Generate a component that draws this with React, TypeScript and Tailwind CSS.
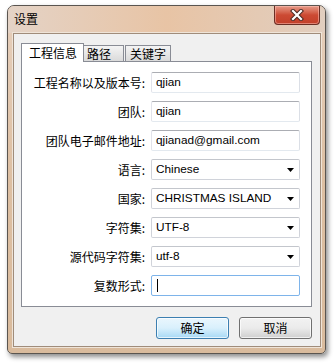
import React from "react";

const cjk = { fontFamily: '"Noto Sans CJK SC", "Noto Sans", sans-serif' };
const latin = { fontFamily: '"Liberation Sans", Arial, sans-serif' };

function Arrow() {
  return (
    <svg width="7" height="4" viewBox="0 0 7 4" className="shrink-0">
      <path d="M0 0 H7 L3.5 4 Z" fill="#000" />
    </svg>
  );
}

function TextBox({ value, focused }: { value?: string; focused?: boolean }) {
  return (
    <div
      className={
        "h-[21px] w-[149px] rounded-[2px] border bg-white flex items-center pl-[4px] text-[11.8px] text-black " +
        (focused
          ? "border-[#7eb4ea]"
          : "border-t-[#abadb3] border-l-[#e2e3ea] border-r-[#dbdfe6] border-b-[#e3e9ef]")
      }
      style={latin}
    >
      {focused ? <span className="ml-px w-px h-[13px] bg-black" /> : value}
    </div>
  );
}

function Combo({ value }: { value: string }) {
  return (
    <div
      className="h-[21px] w-[149px] rounded-[2px] border border-[#d0d3da] border-t-[#c3c6cc] bg-white flex items-center justify-between pl-[4px] pr-[5px] text-[11.8px] text-black"
      style={latin}
    >
      <span>{value}</span>
      <Arrow />
    </div>
  );
}

const rows: { label: string; kind: "text" | "combo" | "focus"; value?: string }[] = [
  { label: "工程名称以及版本号:", kind: "text", value: "qjian" },
  { label: "团队:", kind: "text", value: "qjian" },
  { label: "团队电子邮件地址:", kind: "text", value: "qjianad@gmail.com" },
  { label: "语言:", kind: "combo", value: "Chinese" },
  { label: "国家:", kind: "combo", value: "CHRISTMAS ISLAND" },
  { label: "字符集:", kind: "combo", value: "UTF-8" },
  { label: "源代码字符集:", kind: "combo", value: "utf-8" },
  { label: "复数形式:", kind: "focus" },
];

export default function App() {
  return (
    <div className="w-[336px] h-[364px] bg-white pl-[7px] pt-[5px]">
      <div className="w-[319px] h-[349px] rounded-t-[7px] rounded-b-[5px] border border-[#5a5550] flex flex-col shadow-[2px_3px_5px_rgba(0,0,0,0.45)] bg-gradient-to-b from-[#e6cfbc] via-[#ddbfa2] to-[#d9bb9d]">
        {/* title bar */}
        <div className="h-[27px] flex items-start justify-between rounded-t-[6px] bg-gradient-to-r from-[#e4d3c6] via-[#e8c4a5] to-[#e1cebf]">
          <div className="pl-[6px] pt-[6px] text-[12px] leading-[14px] text-black" style={cjk}>
            设置
          </div>
          <div className="mr-[5px] w-[46px] h-[19px] rounded-b-[4px] border border-t-0 border-[#6a2e24] bg-gradient-to-b from-[#e69a88] via-[#cc4a33] to-[#c2402a] flex items-center justify-center shadow-[inset_0_0_0_1px_rgba(255,200,190,0.5)]">
            <svg width="14" height="12" viewBox="0 0 14 12">
              <path d="M3 2 L11 10 M11 2 L3 10" stroke="#4a2a24" strokeWidth="4.2" strokeLinecap="square" />
              <path d="M3 2 L11 10 M11 2 L3 10" stroke="#ffffff" strokeWidth="2.2" strokeLinecap="square" />
            </svg>
          </div>
        </div>
        {/* client */}
        <div className="flex-1 ml-[5px] mr-[4px] mb-[6px] border border-[#a08c7a] bg-[#f0f0f0] flex flex-col pl-[7px] pr-[8px] pt-[9px] shadow-[0_0_0_1px_#efe4d8]">
          {/* tabs */}
          <div className="flex items-end h-[18px] relative z-10" style={cjk}>
            <div className="w-[63px] h-[19px] -mb-px bg-white border border-b-0 border-[#898c95] flex items-center pl-[7px] text-[12px] text-black">
              工程信息
            </div>
            <div className="w-[40px] h-[16px] border border-l-0 border-b-0 border-[#898c95] bg-gradient-to-b from-[#f4f4f4] to-[#dadada] flex items-end pl-[3px] text-[12px] leading-[15px] text-black">
              路径
            </div>
            <div className="w-[46px] h-[16px] ml-px border border-b-0 border-[#898c95] bg-gradient-to-b from-[#f4f4f4] to-[#dadada] flex items-end pl-[4px] text-[12px] leading-[15px] text-black">
              关键字
            </div>
          </div>
          {/* panel */}
          <div className="w-[291px] h-[246px] bg-white border border-[#898c95] pt-[10px] flex flex-col gap-[8px]">
            {rows.map((r) => (
              <div key={r.label} className="flex items-center h-[21px]">
                <div className="w-[124px] text-right text-[12px] text-black pr-[1px]" style={cjk}>
                  {r.label}
                </div>
                <div className="ml-[5px]">
                  {r.kind === "combo" ? (
                    <Combo value={r.value!} />
                  ) : r.kind === "focus" ? (
                    <TextBox focused />
                  ) : (
                    <TextBox value={r.value} />
                  )}
                </div>
              </div>
            ))}
          </div>
          {/* buttons */}
          <div className="flex justify-end gap-[10px] mt-[10px] w-[291px]" style={cjk}>
            <button className="w-[73px] h-[22px] rounded-[3px] border border-[#3c7fb1] bg-gradient-to-b from-[#eaf6fd] via-[#d9f0fc] to-[#a7d9f5] text-[12px] text-black shadow-[inset_0_0_0_1px_rgba(255,255,255,0.7)]">
              确定
            </button>
            <button className="w-[73px] h-[22px] rounded-[3px] border border-[#707070] bg-gradient-to-b from-[#f2f2f2] via-[#ebebeb] to-[#cfcfcf] text-[12px] text-black shadow-[inset_0_0_0_1px_rgba(255,255,255,0.7)]">
              取消
            </button>
          </div>
        </div>
      </div>
    </div>
  );
}
